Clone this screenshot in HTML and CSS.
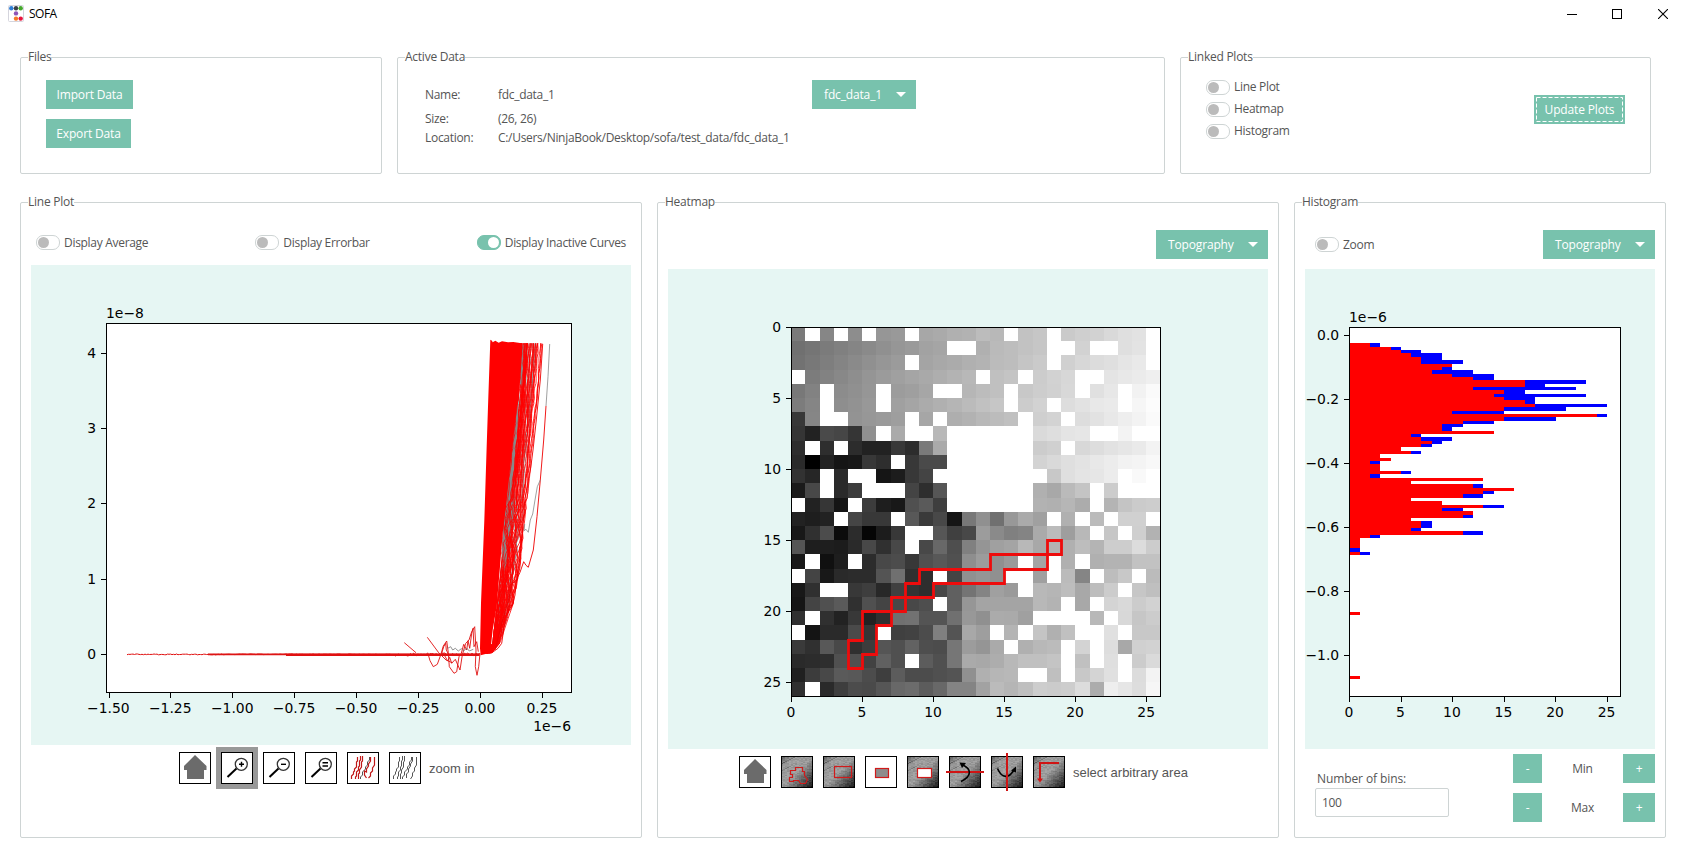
FILE: index.html
```html
<!DOCTYPE html>
<html lang="en">
<head>
<meta charset="utf-8">
<title>SOFA</title>
<link rel="stylesheet" href="styles.css">
</head>
<body>
<header class="titlebar">
  <svg class="app-icon" width="16" height="17" viewBox="0 0 16 17">
    <rect x=".5" y=".5" width="15" height="16" rx="1" fill="#fff" stroke="#d5d5dd"/>
    <circle cx="3.3" cy="3.3" r="2.2" fill="#2f7fd6"/><circle cx="8" cy="3.3" r="2.2" fill="#3a3f45"/><circle cx="12.7" cy="3.3" r="2.2" fill="#45a82c"/>
    <circle cx="8" cy="8.4" r="2.2" fill="#8e55b8"/><circle cx="8" cy="13.6" r="2.2" fill="#f57a2a"/><circle cx="12.7" cy="13.6" r="2.2" fill="#e8143c"/>
  </svg>
  <span class="app-name">SOFA</span>
  <div class="window-controls">
    <svg width="10" height="10"><path d="M0 5.5H10" stroke="#000"/></svg>
    <svg width="10" height="10"><rect x=".5" y=".5" width="9" height="9" fill="none" stroke="#000"/></svg>
    <svg width="10" height="10"><path d="M0 0L10 10M10 0L0 10" stroke="#000" stroke-width="1.1"/></svg>
  </div>
</header>

<main>
  <div class="row row-top">
    <section class="frame files">
      <h2 class="legend">Files</h2>
      <button class="btn import">Import Data</button>
      <button class="btn export">Export Data</button>
    </section>
    <section class="frame active">
      <h2 class="legend">Active Data</h2>
      <dl class="info">
        <dt>Name:</dt><dd>fdc_data_1</dd>
        <dt>Size:</dt><dd>(26, 26)</dd>
        <dt>Location:</dt><dd class="path">C:/Users/NinjaBook/Desktop/sofa/test_data/fdc_data_1</dd>
      </dl>
      <button class="btn combo combo-data"><span>fdc_data_1</span><i class="caret"></i></button>
    </section>
    <section class="frame linked">
      <h2 class="legend">Linked Plots</h2>
      <div class="linked-toggles">
        <label class="toggle"><i class="switch"></i>Line Plot</label>
        <label class="toggle"><i class="switch"></i>Heatmap</label>
        <label class="toggle"><i class="switch"></i>Histogram</label>
      </div>
      <button class="btn update"><svg width="87" height="25"><rect x=".5" y=".5" width="86" height="24" fill="none" stroke="#fff" stroke-dasharray="4 2"/></svg><span>Update Plots</span></button>
    </section>
  </div>

  <div class="row row-bottom">
    <section class="frame plot line-frame">
      <h2 class="legend">Line Plot</h2>
      <div class="line-controls">
        <label class="toggle"><i class="switch"></i>Display Average</label>
        <label class="toggle"><i class="switch"></i>Display Errorbar</label>
        <label class="toggle"><i class="switch on"></i>Display Inactive Curves</label>
      </div>
      <svg id="line" class="figure" width="600" height="480" viewBox="31 265 600 480"></svg>
      <div class="tools tools-line">
        <svg class="tool" viewBox="0 0 32 32"><rect x=".5" y=".5" width="31" height="31" class="tbox"/><path d="M16 3L5 14V18H8V27H25V18H27.500V14Z" fill="#6b6b6b"/></svg>
        <span class="selected"><svg class="tool" viewBox="0 0 32 32"><rect x=".5" y=".5" width="31" height="31" class="tbox"/><path d="M6.500 25L15.500 16.500" class="handle"/><circle cx="20.300" cy="12.300" r="6" class="lens"/><path d="M18 12.300H23M20.500 9.800V14.800" class="sign"/></svg></span>
        <svg class="tool" viewBox="0 0 32 32"><rect x=".5" y=".5" width="31" height="31" class="tbox"/><path d="M6.500 25L15.500 16.500" class="handle"/><circle cx="20.300" cy="12.300" r="6" class="lens"/><path d="M18 12.300H23" class="sign"/></svg>
        <svg class="tool" viewBox="0 0 32 32"><rect x=".5" y=".5" width="31" height="31" class="tbox"/><path d="M6.500 25L15.500 16.500" class="handle"/><circle cx="20.300" cy="12.300" r="6" class="lens"/><path d="M17.500 10.800H23M17.500 14H23" class="sign"/></svg>
        <svg class="tool" viewBox="0 0 32 32"><rect x=".5" y=".5" width="31" height="31" class="tbox"/><g class="curves"><path class="r" d="M10.500 5V9L9.500 10V15L7.500 17V19L6.500 20V22L4.500 24V27"/><path class="r" d="M13.500 4V8L12.500 9V14L11.500 15V18L9.500 20V24L8.500 25V27"/><path class="r" d="M15.500 4V9L14.500 10V15L12.500 18V21L11.500 22V27"/><path d="M22.500 5V8L20.500 10V13L18.500 15V17L15.500 20V23L13.500 25V27"/><path class="r" d="M23.500 5V9L21.500 12V14L19.500 17V20L17.500 19V23L19.500 26"/><path class="r" d="M27.500 5V13L25.500 16V19L23.500 21V24L21.500 26"/></g></svg>
        <svg class="tool" viewBox="0 0 32 32"><rect x=".5" y=".5" width="31" height="31" class="tbox"/><g class="curves"><path d="M10.500 5V9L9.500 10V15L7.500 17V19L6.500 20V22L4.500 24V27"/><path d="M13.500 4V8L12.500 9V14L11.500 15V18L9.500 20V24L8.500 25V27"/><path d="M15.500 4V9L14.500 10V15L12.500 18V21L11.500 22V27"/><path d="M22.500 5V8L20.500 10V13L18.500 15V17L15.500 20V23L13.500 25V27"/><path d="M23.500 5V9L21.500 12V14L19.500 17V20L17.500 22V26"/><path d="M27.500 5V13L25.500 16V19L23.500 21V24L21.500 27"/></g></svg>
        <span class="tool-label">zoom in</span>
      </div>
    </section>

    <section class="frame plot heat-frame">
      <h2 class="legend">Heatmap</h2>
      <div class="plot-controls"><button class="btn combo topo"><span>Topography</span><i class="caret"></i></button></div>
      <svg id="heat" class="figure" width="600" height="480" viewBox="668 269 600 480"></svg>
      <div class="tools tools-heat">
        <svg class="tool" viewBox="0 0 32 32"><rect x=".5" y=".5" width="31" height="31" class="tbox"/><path d="M16 3L5 14V18H8V27H25V18H27.500V14Z" fill="#6b6b6b"/></svg>
        <svg class="tool" viewBox="0 0 32 32"><g class="tex"></g><path class="red" d="M14.500 11.500H21.500V15.500H23.500V19.500L26.500 23.500L24.500 27.500H19.500L17.500 24.500H12.500V25.500H8.500V21.500H11.500V18.500H9.500V14.500H14.500Z"/></svg>
        <svg class="tool" viewBox="0 0 32 32"><g class="tex"></g><rect class="red" x="11.500" y="10.500" width="17" height="11"/></svg>
        <svg class="tool" viewBox="0 0 32 32"><rect x=".5" y=".5" width="31" height="31" class="tbox"/><rect class="red filled-grey" x="10.500" y="12.500" width="13" height="9"/></svg>
        <svg class="tool" viewBox="0 0 32 32"><g class="tex"></g><rect class="red filled-white" x="10.500" y="12.500" width="14" height="9"/></svg>
        <svg class="tool" viewBox="0 0 32 32"><g class="tex"></g><path class="axis" d="M-3 16H35"/><path class="bend" d="M12 25.500C23 20 23 13 13 8.500"/><path d="M10.500 6.500L17 7L13 12Z"/></svg>
        <svg class="tool" viewBox="0 0 32 32"><g class="tex"></g><path class="bend" d="M6.500 12.500C11 23 18 22.500 23 14"/><path d="M25 10.500L20 14.500L25 16.500Z"/><path class="axis" d="M16 -3V35"/></svg>
        <svg class="tool" viewBox="0 0 32 32"><g class="tex"></g><path class="axis" d="M26 7H7V23"/><path d="M4 22.500H10L7 26.500Z" fill="#d01414"/></svg>
        <span class="tool-label">select arbitrary area</span>
      </div>
    </section>

    <section class="frame plot hist-frame">
      <h2 class="legend">Histogram</h2>
      <div class="plot-controls"><label class="toggle"><i class="switch"></i>Zoom</label><button class="btn combo topo"><span>Topography</span><i class="caret"></i></button></div>
      <svg id="hist" class="figure" width="350" height="480" viewBox="1305 269 350 480"></svg>
      <div class="hist-bottom">
        <div class="bins"><label for="bins">Number of bins:</label><input id="bins" value="100"></div>
        <div class="steppers">
          <button class="btn">-</button><span>Min</span><button class="btn">+</button>
          <button class="btn">-</button><span>Max</span><button class="btn">+</button>
        </div>
      </div>
    </section>
  </div>
</main>
<script src="plots.js"></script>
</body>
</html>
```

FILE: styles.css
```css
* { box-sizing: border-box; }
body { margin: 0; width: 1686px; height: 858px; overflow: hidden; background: #fff; color: #555; font: 12px/16px "Open Sans", "Noto Sans", sans-serif; letter-spacing: -.3px; }
button, input { font: inherit; letter-spacing: inherit; }
.titlebar { display: flex; align-items: center; height: 27px; padding: 0 18px 0 8px; color: #000; }
.app-name { margin-left: 5px; letter-spacing: -.5px; }
.window-controls { display: flex; gap: 35.500px; margin-left: auto; }
.window-controls svg:nth-child(2) { margin: 0 .5px 0 -.5px; }
.row { display: flex; }
.row-top { padding: 30px 0 0 20px; }
.row-bottom { padding: 28px 0 0 20px; }
.frame { position: relative; border: 1px solid #ced4d4; border-radius: 2px; }
.row-top .frame { height: 117px; }
.row-bottom .frame { height: 636px; }
.legend { position: absolute; top: -9px; left: 7px; margin: 0; font-size: 12px; font-weight: 400; line-height: 16px; letter-spacing: -.25px; background: #fff; white-space: nowrap; }
.btn { display: block; height: 29px; padding: 0; border: 0; background: #78c2ad; color: #fff; white-space: nowrap; letter-spacing: -.15px; }
.files { width: 362px; margin-right: 15px; padding: 22px 0 0 25px; }
.import { width: 87px; margin-bottom: 10px; }
.export { width: 85px; }
.active { display: flex; align-items: flex-start; width: 768px; margin-right: 15px; padding: 22px 0 0 27px; }
.info { display: grid; grid-template-columns: 73px 314px; grid-template-rows: 29px 20px 18px; align-items: center; margin: 0; width: 387px; }
.info dd { margin: 0; white-space: nowrap; }
.combo { display: flex; align-items: center; justify-content: space-between; padding: 0 10px 0 12px; }
.combo-data { width: 104px; }
.topo { width: 112px; margin-left: auto; }
.caret { width: 0; height: 0; border: 5px solid transparent; border-top-color: #fff; border-bottom: 0; }
.linked { display: flex; justify-content: space-between; width: 471px; padding: 22px 25px 0; }
.linked-toggles { display: grid; grid-auto-rows: 22px; align-content: start; margin-top: -4px; }
.toggle { display: flex; align-items: center; gap: 4px; white-space: nowrap; }
.switch { width: 24px; height: 15px; border: 1px solid #ced4d4; border-radius: 7px; padding: 1px; }
.switch::before { content: ""; display: block; width: 11px; height: 11px; border-radius: 50%; background: #bbb; }
.switch.on { background: #78c2ad; border-color: #78c2ad; }
.switch.on::before { background: #fff; margin-left: 9px; }
.update { display: grid; place-items: center; width: 91px; margin-top: 15px; }
.update > * { grid-area: 1 / 1; }
.line-frame { width: 622px; margin-right: 15px; padding: 0 10px; }
.heat-frame { width: 622px; margin-right: 15px; padding: 0 10px; }
.hist-frame { width: 372px; padding: 0 10px; }
.figure { display: block; font-family: "DejaVu Sans", sans-serif; font-size: 13.900px; letter-spacing: 0; fill: #000; }
.line-controls { display: flex; justify-content: space-between; align-items: center; height: 62px; padding: 17px 5px 0; }
.plot-controls { display: flex; align-items: center; height: 66px; padding: 17px 0 0 10px; }
.tools { display: flex; align-items: center; gap: 10px; height: 42px; }
.tools-line { margin-top: 2px; padding-left: 148px; }
.tools-heat { margin-top: 2px; padding-left: 71px; }
.tool { display: block; flex: none; width: 32px; height: 32px; overflow: visible; }
.selected { margin: 0 -5px; padding: 5px; background: #999; }
.tool-label { margin: 1px 0 0 -2px; font: 13px/16px "Liberation Sans", sans-serif; letter-spacing: 0; }
.tbox { fill: #fff; stroke: #000; }
.handle { stroke: #000; stroke-width: 2; }
.lens { fill: #fff; stroke: #333; stroke-width: 1.300; }
.sign { stroke: #000; stroke-width: 1.400; }
.curves path { fill: none; stroke: #555; }
.curves .r { stroke: #c01818; stroke-width: 1.200; }
.red { fill: none; stroke: #d01a1a; stroke-width: 1.200; }
.filled-grey { fill: #8d8d8d; }
.filled-white { fill: #fff; }
.axis { fill: none; stroke: #d01414; stroke-width: 2; }
.bend { fill: none; stroke: #000; stroke-width: 1.600; }
.hist-bottom { display: flex; justify-content: space-between; }
.bins { padding: 22px 0 0 10px; }
.bins label { display: block; margin-left: 2px; letter-spacing: -.1px; }
.bins input { display: block; width: 134px; height: 29px; margin-top: 1px; padding: 0 6px; border: 1px solid #ced4d4; border-radius: 2px; color: #555; outline: 0; }
.steppers { display: grid; grid-template-columns: 29px 81px 32px; grid-auto-rows: 29px; row-gap: 10px; align-items: center; padding-top: 5px; text-align: center; }
```

FILE: plots.js
```javascript
const byId = id => document.getElementById(id);
let seed = 7;
const rnd = () => (seed = (seed * 16807) % 2147483647) / 2147483647;
const rect = (x, y, w, h, f) => `<rect x="${x}" y="${y}" width="${w}" height="${h}" fill="${f}" shape-rendering="crispEdges"/>`;
const label = (x, y, s, a) => `<text x="${x}" y="${y}" text-anchor="${a}">${s}</text>`;

function axes(x0, y0, x1, y1, xt, yt) {
  let s = `<rect x="${x0 + .5}" y="${y0 + .5}" width="${x1 - x0}" height="${y1 - y0}" fill="none" stroke="#000"/>`;
  for (const [x, t] of xt) s += rect(Math.round(x), y1 + 1, 1, 5, '#000') + label(x - .2, y1 + 21, t, 'middle');
  for (const [y, t] of yt) s += rect(x0 - 5, Math.round(y), 5, 1, '#000') + label(x0 - 9.800, y + 5, t, 'end');
  return s;
}

/* Heatmap: one hex pair per cell, ".." marks an empty cell */
const cells = `
7a .. 86 .. 8d .. 96 99 .. a7 aa b0 b2 bc b8 .. c2 c6 .. ca cf d2 d9 df e2 ..
70 75 7b 80 85 8a 90 96 9a a2 a5 .. .. b0 ba bd c2 c6 .. .. d2 .. .. df e3 ..
72 78 7e 84 8a 90 96 9b .. a4 a8 ab b0 b3 bb bd c5 ca .. d0 d7 dc df e5 e9 ..
.. 7c 82 88 8e 95 9b a0 a5 a9 ae b3 b8 .. c0 c4 .. cc d2 d7 .. .. e4 e8 eb ef
78 82 .. 8c 90 96 .. 9c 9f a6 .. .. b6 bc c0 .. c8 cd d1 d8 .. e0 e7 .. f2 fa
7c 85 .. 8e 92 98 .. a0 a5 ab b0 b5 bb c1 c6 .. cc d2 .. dd e2 e8 ea .. f6 fc
38 86 .. .. 93 97 9a 9e .. a6 .. ae b2 b8 bc c0 .. cf d3 .. dd e2 e8 ee f3 fa
35 22 4a 46 35 90 .. aa .. .. b8 .. .. .. .. .. .. da de e4 e6 .. .. f3 .. ..
2e .. 2e .. 2c 22 22 38 2c 7a aa .. .. .. .. .. .. cc d0 .. d8 dd e2 e6 ea f3
2a 00 22 15 18 38 2e .. 38 4a 4a .. .. .. .. .. .. d3 d9 df e3 e8 ec f2 f4 f8
32 26 .. 2a .. .. 15 1c 38 44 .. .. .. .. .. .. .. .. c8 df e4 e6 ec .. f9 ..
1a 48 .. 2a 3c .. .. .. 44 2e 56 .. .. .. .. .. .. b0 a8 ba c4 .. cc .. .. ..
.. 22 36 15 .. 3c 1e 18 50 5a 3e .. .. .. .. .. .. b2 b0 b6 ac .. b4 c4 cb cd
22 1e 22 .. 45 38 38 .. 58 3a 48 15 78 90 70 98 aa a0 .. b0 .. bb .. d0 d0 ..
18 30 4c 0c 2c 05 1c 38 .. .. 56 40 48 9c 8a 80 84 aa bb 9e b8 .. c6 .. cf b2
55 1e 1e 1c 2a 48 30 48 .. 48 68 4e 80 95 a0 a4 b8 a8 b4 b0 bd b4 cd cd dc cc
18 .. 10 1e .. 2c 48 4c 38 50 58 50 8e 9c 90 9a .. a4 .. b0 .. b0 b3 b3 c2 c2
.. 44 18 2a 2c 2c 54 70 30 2e .. 44 90 95 90 .. .. a0 .. bb 85 .. bd c8 .. bb
18 30 .. .. 38 3e 28 40 34 2e 48 60 74 84 a0 9a .. b8 b5 bd a8 bd cc .. c6 bf
15 44 50 5a 30 50 44 48 48 4e .. 60 96 a4 a4 a4 a4 b8 b3 .. a8 .. d4 d9 cc d2
30 .. 30 22 38 22 30 70 72 54 54 70 98 90 ab aa a0 .. .. .. .. b8 .. d8 c6 cc
.. 14 2a 2a 4a 35 .. 40 42 4c 80 54 a8 9e .. b4 .. c4 b0 c0 .. .. e0 .. c8 c8
3a 30 58 48 30 3c 55 50 62 4e 4c 76 9c 95 aa .. b0 b8 bb .. d3 .. dd a8 d0 d2
2a 2c 2e 50 50 42 60 50 .. 5c 50 76 aa a8 ad b8 c0 c0 c4 .. c0 .. df .. cc da
20 3c 48 5a 58 4c 3e 5c 4c 4c 50 54 90 b0 b6 b8 .. .. bf .. c8 d4 e0 .. dc f3
30 .. 2a 3e 4c 4a 56 68 6c 5c 68 84 84 a2 bb b5 bf cd cb cd dc ac ee e6 dd f6`
  .trim().split('\n').map(r => r.split(' '));
const step = 369.500 / 26, hx = i => Math.round(791.1 + i * step), hy = i => Math.round(327 + i * step);
let h = rect(668, 269, 600, 480, '#e6f6f3') + rect(791, 327, 370, 370, '#fff');
cells.forEach((row, j) => row.forEach((v, i) => {
  if (v !== '..') h += rect(hx(i), hy(j), hx(i + 1) - hx(i), hy(j + 1) - hy(j), '#' + v + v + v);
}));
const outline = [[4,22],[5,22],[5,20],[7,20],[7,19],[8,19],[8,18],[9,18],[9,17],[14,17],[14,16],[18,16],[18,15],[19,15],[19,16],[18,16],[18,17],[15,17],[15,18],[10,18],[10,19],[8,19],[8,20],[7,20],[7,21],[6,21],[6,23],[5,23],[5,24],[4,24]];
h += `<path d="M${outline.map(([a, b]) => `${hx(a) + .5} ${hy(b) + .5}`).join('L')}Z" fill="none" stroke="#ee0c0c" stroke-width="2.8"/>`;
const five = [0, 5, 10, 15, 20, 25];
h += axes(791, 327, 1160, 696, five.map(n => [791.1 + n * step, n]), five.map(n => [327 + n * step, n]));
byId('heat').innerHTML = h;

/* Histogram: [active, all] per bin */
const bins = [[2,3],[4,5],[5,7],[6,9],[7,9],[7,11],[10,10],[9,10],[8,12],[10,14],[12,14],[17,23],[17,19],[12,22],[15,17],[14,23],[15,18],[17,18],[18,25],[15,21],[10,15],[24,25],[15,20],[11,14],[9,11],[9,10],[14,14],[6,7],[7,10],[8,9],[7,8],[5,5],[6,7],[3,3],[4,4],[2,3],[3,3],[3,3],[5,6],[2,3],[13,13],[6,6],[12,13],[16,16],[13,14],[11,13],[6,6],[9,9],[13,15],[9,11],[12,12],[11,12],[6,6],[7,8],[7,8],[6,7],[11,13],[2,3],[1,1],[1,1],[1,1],[0,1],[1,2]];
bins[80] = [1, 1]; bins[99] = [1, 1];
const ux = 10.310, bh = 3.357;
let g = rect(1305, 269, 350, 480, '#e6f6f3') + rect(1349, 327, 271, 369, '#fff');
bins.forEach(([r, b], i) => {
  const y = Math.round(343.4 + i * bh), dy = Math.round(343.4 + (i + 1) * bh) - y;
  const X = n => Math.round(1349.3 + n * ux);
  g += rect(1349, y, X(b) - 1349, dy, '#00f');
  if (r) g += rect(1349, y, X(r) - 1349, dy, '#f00');
});
g += axes(1349, 327, 1620, 696, five.map(n => [1349 + n * ux, n]), ['0.0', '−0.2', '−0.4', '−0.6', '−0.8', '−1.0'].map((t, i) => [334.8 + i * 64.07, t]));
g += label(1349, 322, '1e−6', 'start');
byId('hist').innerHTML = g;

/* Line plot */
const poly = (p, c, w = .8) => `<path d="M${p.map(q => q[0].toFixed(1) + ' ' + q[1].toFixed(1)).join('L')}" fill="none" stroke="${c}" stroke-width="${w}"/>`;
const zx = x => 380 + x / 3, zy = y => 320 + y / 3;
const zpts = a => a.map(([x, y]) => [zx(x), zy(y)]);
const fill = (a, c) => `<path d="M${zpts(a).map(p => p.join(' ')).join('L')}Z" fill="${c}"/>`;
let l = rect(31, 265, 600, 480, '#e6f6f3') + rect(106, 323, 465, 370, '#fff');

/* left / right limits of the bundle, interpolated down the plot */
const limits = [[70, 418, 486], [250, 408, 470], [440, 388, 452], [600, 372, 434], [740, 364, 420], [850, 352, 400], [920, 344, 376], [970, 338, 360], [1000, 318, 334]];
function limit(y, k) {
  let i = 1;
  while (limits[i][0] < y) i++;
  const [y0, a0, b0] = limits[i - 1], [y1, a1, b1] = limits[i], t = (y - y0) / (y1 - y0);
  return (a0 + (a1 - a0) * t) * (1 - k) + (b0 + (b1 - b0) * t) * k;
}
function curve(k, c) {
  const p = [];
  let drift = 0;
  for (let y = 70; y <= 1000; y += 15) {
    drift = drift * .7 + (rnd() - .5) * (y > 540 ? .22 : .08);
    p.push([limit(y, Math.max(0, Math.min(1, k + drift))), y]);
  }
  return poly(zpts(p), c);
}
for (let i = 0; i < 16; i++) l += curve(rnd() * .75, '#888');
for (let i = 0; i < 34; i++) l += curve(Math.pow(rnd(), 1.25), '#f00');
l += fill([[412,250],[415,300],[409,400],[404,500],[400,600],[386,660],[382,730],[372,755],[366,690],[372,600],[385,480],[396,380]], '#888');
l += fill([[428,75],[438,72],[434,150],[424,200],[420,190]], '#888');
for (let i = 0; i < 9; i++) l += curve(.05 + rnd() * .4, '#f00');
l += fill([[331,59],[336,62],[338,67],[346,62],[356,68],[366,64],[384,67],[400,66],[425,70],[420,170],[410,260],[393,420],[378,560],[368,640],[360,740],[350,860],[338,930],[332,985],[325,1000],[302,1006],[300,985],[303,850],[313,600],[320,380],[325,230]], '#f00');
l += poly(zpts([[509,72],[504,170],[498,258]]), '#888');
l += poly(zpts([[498,258],[491,360],[481,480],[471,590],[460,690],[445,742],[438,736],[431,725],[420,757],[409,781],[405,825],[397,857],[387,858],[383,890],[372,922],[365,970],[354,985],[336,998]]), '#e00', .9);
l += poly(zpts([[481,480],[472,500],[465,540],[458,582],[451,600],[445,637],[438,628],[432,632],[434,612]]), '#888');
l += poly(zpts([[488,72],[481,180],[469,300],[459,390],[452,444],[442,495],[435,535],[429,610],[421,700],[411,780],[397,790],[388,830],[375,875],[360,930],[345,990]]), '#e00', .9);
const base = [];
for (let x = 127; x < 481; x += 1.5) base.push([x, 654.4 + (rnd() - .5) * (x > 390 ? 3 : .8)]);
l += poly(base, '#e01010', 1) + poly(base.filter(p => p[0] > 207).map(([x]) => [x, 654.4]), '#dd1414', 1.6);
l += poly(base.filter(p => p[0] > 285).map(([x]) => [x, 654.8]), '#e01010', 2.2);
[[[73,968],[108,998]],[[142,952],[176,998],[198,1020],[216,1028]],
 [[143,998],[150,1022],[160,1040],[172,1033],[182,1005],[190,978],[200,963],[205,998],[208,1040],[222,1060],[230,1055],[237,1010],[246,1000]],
 [[190,1000],[203,1023],[209,1012],[215,1030],[226,1018],[240,1050],[247,1005],[257,970],[267,960],[275,935],[284,920],[288,990],[286,1040],[291,1066],[296,1040],[300,1000]],
 [[244,1000],[251,973],[260,990],[264,962],[269,985],[275,940],[279,925],[282,980],[290,965],[295,995]],
 [[185,1000],[191,980],[197,970],[199,990],[204,1000]]
].forEach(p => l += poly(zpts(p), '#e01010', .9));
l += poly(zpts([[203,985],[212,980],[218,990],[226,985],[235,993],[244,986],[251,993],[260,984],[268,993],[280,988]]), '#777');
l += axes(106, 323, 571, 692, ['−1.50', '−1.25', '−1.00', '−0.75', '−0.50', '−0.25', '0.00', '0.25'].map((t, i) => [108.500 + i * 61.95, t]), ['4', '3', '2', '1', '0'].map((t, i) => [352.6 + i * 75.4, t]));
l += label(106, 318, '1e−8', 'start') + label(571, 731, '1e−6', 'end');
byId('line').innerHTML = l;

/* Textured tool backgrounds: diagonal light band with a little grain */
document.querySelectorAll('.tex').forEach(t => {
  let s = '';
  seed = 31;
  for (let y = 0; y < 32; y += 1) for (let x = 0; x < 32; x += 2) {
    const d = (x + y) / 62;
    let v = d < .2 ? 95 + d * 300 : d < .5 ? 155 : 155 - (d - .5) * 270;
    v = Math.round(Math.max(18, v + (rnd() - .5) * 26 - (d < .3 && (x + y * 2) % 7 === 0 ? 30 : 0)));
    s += rect(x, y, 2, 1, `rgb(${v},${v},${v})`);
  }
  t.innerHTML = s + '<rect x=".5" y=".5" width="31" height="31" fill="none" stroke="#000"/>';
});
```
